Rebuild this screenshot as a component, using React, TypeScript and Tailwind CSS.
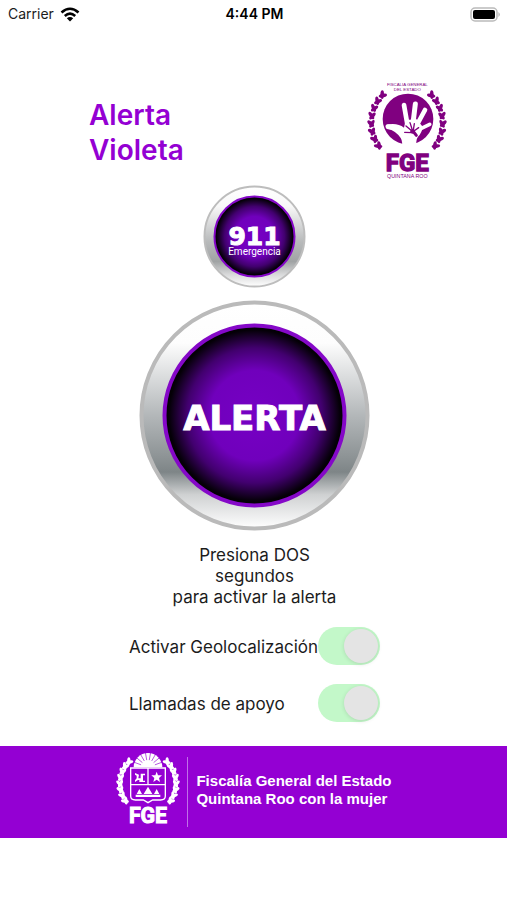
import React from "react";

type Leaf = { x: number; y: number; angle: number };

function branch(cx: number, cy: number, rx: number, ry: number, from: number, to: number, count: number): Leaf[] {
  return Array.from({ length: count }, (_, i) => {
    const deg = from + ((to - from) * i) / (count - 1);
    const t = (deg * Math.PI) / 180;
    return { x: cx + rx * Math.cos(t), y: cy + ry * Math.sin(t), angle: deg };
  });
}

function Laurel({ cx, cy, rx, ry, size }: { cx: number; cy: number; rx: number; ry: number; size: number }) {
  const leaves = branch(cx, cy, rx, ry, 138, 222, 8);
  const side = leaves.map((l, i) => (
    <g key={i} transform={`translate(${l.x} ${l.y}) rotate(${l.angle})`}>
      <ellipse cx={size * 0.5} cy={size * 0.3} rx={size * 0.8} ry={size * 0.34} transform="rotate(50)" />
      <ellipse cx={size * 0.5} cy={-size * 0.2} rx={size * 0.8} ry={size * 0.34} transform="rotate(125)" />
    </g>
  ));
  return (
    <g>
      <g>{side}</g>
      <g transform={`translate(${cx * 2} 0) scale(-1 1)`}>{side}</g>
    </g>
  );
}

function HandLogo() {
  return (
    <svg viewBox="0 0 288 324" className="h-[108px] w-24 shrink-0" fill="#800080" role="img" aria-label="Fiscalía General del Estado Quintana Roo">
      <g textAnchor="middle" fontFamily="'Liberation Sans', Arial, sans-serif">
        <text x="142" y="30" fontSize="13">FISCALIA GENERAL</text>
        <text x="142" y="46" fontSize="13">DEL ESTADO</text>
        <text x="142" y="284" fontSize="72" fontWeight="700" stroke="#800080" strokeWidth="4" fontFamily="Roboto, sans-serif">FGE</text>
        <text x="142" y="306" fontSize="16">QUINTANA ROO</text>
      </g>
      <circle cx="144" cy="129" r="76" />
      <Laurel cx={141} cy={140} rx={107} ry={114} size={16} />
      <g stroke="#fff" strokeLinecap="round" fill="none">
        <path d="M132 87 L143 150" strokeWidth="14" />
        <path d="M166 84 L158 150" strokeWidth="15" />
        <path d="M195 102 L169 150" strokeWidth="14" />
        <path d="M209 145 L178 160" strokeWidth="11" />
        <path d="M84 152 Q112 150 138 184" strokeWidth="15" />
      </g>
      <path d="M80 146 Q112 139 132 155 L137 132 L170 130 L188 152 Q186 170 174 182 Q166 192 170 222 H124 Q130 198 122 186 Q108 164 82 158Z" fill="#fff" />
      <g stroke="#800080" strokeLinecap="round" fill="none">
        <path d="M138 150 L155 164" strokeWidth="4" />
        <path d="M150 140 L157 162" strokeWidth="4" />
        <path d="M163 143 L160 162" strokeWidth="4" />
        <path d="M176 155 L162 165" strokeWidth="4" />
        <path d="M134 169 L156 170" strokeWidth="4" />
        <path d="M161 168 L169 178" strokeWidth="9" />
      </g>
      <circle cx="158" cy="166" r="7" />
    </svg>
  );
}

function ShieldLogo() {
  return (
    <svg viewBox="0 0 210 240" className="h-20 w-[70px] shrink-0" fill="#fff" role="img" aria-label="FGE">
      <Laurel cx={105} cy={94} rx={84} ry={88} size={15} />
      <path d="M62 46 A43 43 0 0 1 148 46Z" />
      <g stroke="#9400d3" strokeWidth="2">
        {[200, 220, 240, 260, 280, 300, 320, 340].map((deg) => {
          const t = (deg * Math.PI) / 180;
          return <line key={deg} x1={105 + 22 * Math.cos(t)} y1={46 + 22 * Math.sin(t)} x2={105 + 46 * Math.cos(t)} y2={46 + 46 * Math.sin(t)} />;
        })}
      </g>
      <path d="M53 48 H157 V132 Q157 144 143 144 H119 L105 152 L91 144 H67 Q53 144 53 132Z" fill="#9400d3" stroke="#fff" strokeWidth="4" />
      <path d="M53 98 H157 M105 48 V98" stroke="#fff" strokeWidth="4" />
      <g transform="translate(0 -9)">
        <path d="M66 72 L78 77 L76 88 H83 V74 H96 V79 H90 V95 H96 V99 H79 V93 H75 L66 99 V94 L71 88 V80 L66 77Z" />
        <path d="M131 68 L135 79 H147 L138 87 L141 99 L131 92 L121 99 L124 87 L115 79 H127Z" />
      </g>
      <path d="M68 128 H142 V135 H68Z M71 126 L79 111 L87 126Z M92 126 L105 104 L118 126Z M123 126 L131 111 L139 126Z" />
      <text x="105" y="212" fontSize="64" fontWeight="700" stroke="#fff" strokeWidth="3" textAnchor="middle" fontFamily="Roboto, sans-serif">FGE</text>
    </svg>
  );
}

function Toggle({ id, label }: { id: string; label: string }) {
  return (
    <div className="flex h-[38px] items-center justify-between">
      <label htmlFor={id} className="pt-1">{label}</label>
      <input
        id={id}
        type="checkbox"
        role="switch"
        defaultChecked
        className="flex h-[38px] w-[62px] shrink-0 cursor-pointer appearance-none items-center rounded-full bg-gray-200 px-0.5 before:size-[34px] before:rounded-full before:bg-[#e4e4e4] before:shadow-[0_1px_4px_rgba(0,0,0,0.12)] before:content-[''] checked:justify-end checked:bg-[#c3f8c9]"
      />
    </div>
  );
}

export default function App() {
  return (
    <div className="flex min-h-screen flex-col bg-white font-['Inter',sans-serif] text-[#1c1c1c]">
      <div className="grid h-7 grid-cols-3 items-center pr-1.5 pl-2">
        <div className="flex items-center gap-1.5 text-sm">
          <span>Carrier</span>
          <svg viewBox="0 0 20 15" className="h-[15px] w-5" fill="none" stroke="#000" strokeWidth="2.6" aria-label="Wi-Fi">
            <path d="M1.5 5.5 Q10 -2 18.5 5.5" />
            <path d="M4.8 9 Q10 4.300 15.200 9" />
            <path d="M10 14.500 L6.800 11.200 Q10 8.600 13.200 11.200Z" fill="#000" stroke="none" />
          </svg>
        </div>
        <span className="text-center text-sm font-semibold text-black">4:44 PM</span>
        <svg viewBox="0 0 31 15" className="h-[15px] w-[31px] justify-self-end" aria-label="Battery">
          <rect x="1" y="1" width="26" height="13" rx="4" fill="#fff" stroke="#bbb" strokeWidth="1.500" />
          <rect x="3" y="3" width="22" height="9" rx="2" />
          <path d="M28.500 5 Q31 7.500 28.500 10Z" fill="#aaa" />
        </svg>
      </div>

      <main className="mx-auto flex w-full max-w-[507px] flex-col items-center pt-12 pl-0.5">
        <header className="flex w-full items-center justify-between pr-[51px] pl-[87px]">
          <h1 className="pt-1.5 text-[28px] leading-[35px] font-semibold text-[#9400d3]">
            Alerta
            <br />
            Violeta
          </h1>
          <HandLogo />
        </header>

        <button type="button" className="mt-px size-[103px] cursor-pointer rounded-full">
          <svg viewBox="0 0 103 103" className="size-full">
            <defs>
              <linearGradient id="ring" x1="0" y1="0" x2="0" y2="1">
                <stop offset="0" stopColor="#fff" />
                <stop offset="0.18" stopColor="#fdfdfd" />
                <stop offset="0.5" stopColor="#b3b7b9" />
                <stop offset="0.68" stopColor="#8e9496" />
                <stop offset="0.75" stopColor="#7e8587" />
                <stop offset="0.85" stopColor="#cfd1d2" />
                <stop offset="1" stopColor="#fff" />
              </linearGradient>
              <linearGradient id="softRing" x1="0" y1="0" x2="0" y2="1">
                <stop offset="0" stopColor="#fff" />
                <stop offset="0.2" stopColor="#f8f8f8" />
                <stop offset="0.55" stopColor="#b8babb" />
                <stop offset="0.75" stopColor="#a0a3a4" />
                <stop offset="0.88" stopColor="#d8d9da" />
                <stop offset="1" stopColor="#fff" />
              </linearGradient>
              <radialGradient id="glow">
                <stop offset="0" stopColor="#7600c4" />
                <stop offset="0.5" stopColor="#7000bc" />
                <stop offset="0.75" stopColor="#42006f" />
                <stop offset="0.95" stopColor="#050008" />
                <stop offset="1" stopColor="#000" />
              </radialGradient>
            </defs>
            <circle cx="51.5" cy="51.5" r="50" fill="url(#softRing)" stroke="#bdbdbd" strokeWidth="2" />
            <circle cx="51.5" cy="51.5" r="40" fill="url(#glow)" stroke="#8508c8" strokeWidth="2" />
            <g fill="#fff" textAnchor="middle">
              <text x="51.5" y="60" fontSize="25" fontWeight="700" stroke="#fff" strokeWidth="1" fontFamily="'DejaVu Sans', sans-serif">911</text>
              <text x="51.5" y="70" fontSize="10" fontFamily="Roboto, sans-serif">Emergencia</text>
            </g>
          </svg>
        </button>

        <button type="button" className="mt-3 size-[231px] cursor-pointer rounded-full">
          <svg viewBox="0 0 231 231" className="size-full">
            <circle cx="115.5" cy="115.5" r="113" fill="url(#ring)" stroke="#bababa" strokeWidth="4" />
            <circle cx="115.5" cy="115.5" r="90" fill="url(#glow)" stroke="#8508c8" strokeWidth="4" />
            <text x="115.5" y="130" fontSize="34" fontWeight="700" fill="#fff" stroke="#fff" strokeWidth="1" textAnchor="middle" fontFamily="'DejaVu Sans', sans-serif">ALERTA</text>
          </svg>
        </button>

        <p className="mt-3.5 text-center text-[17px] leading-[21px]">
          Presiona DOS
          <br />
          segundos
          <br />
          para activar la alerta
        </p>

        <div className="mt-[19px] flex w-[251px] flex-col gap-[19px] text-[17px] whitespace-nowrap">
          <Toggle id="geo" label="Activar Geolocalización" />
          <Toggle id="calls" label="Llamadas de apoyo" />
        </div>
      </main>

      <footer className="mt-6 flex h-[92px] items-center justify-center bg-[#9400d3] pr-0.5 text-white">
        <ShieldLogo />
        <div className="ml-1 flex h-[70px] items-center border-l border-[#c070e8] pb-1 pl-2">
          <p className="font-['Liberation_Sans',Arial,sans-serif] text-[15px] leading-[18px] font-bold">
            Fiscalía General del Estado
            <br />
            Quintana Roo con la mujer
          </p>
        </div>
      </footer>
    </div>
  );
}
